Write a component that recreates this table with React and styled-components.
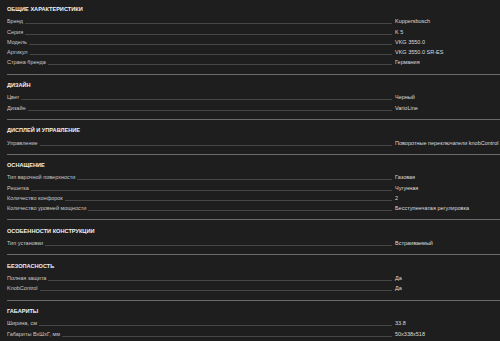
import React from 'react';
import styled, { createGlobalStyle } from 'styled-components';

const GlobalStyle = createGlobalStyle`
  html, body {
    margin: 0;
    padding: 0;
    background: #1e1e1e;
  }
  body {
    font-family: 'Liberation Sans', Arial, sans-serif;
  }
`;

const Page = styled.div`
  min-height: 341px;
  background: #1e1e1e;
  padding: 0 0 0 7px;
  overflow: hidden;
`;

const Section = styled.section`
  padding: 5.5px 0 5.8px;
  border-top: 1px solid #6a6a6a;

  &:first-child {
    border-top: none;
    padding-top: 4px;
  }
`;

const Title = styled.h3`
  margin: 0 0 2.3px;
  font-size: 5.6px;
  line-height: 10px;
  font-weight: 700;
  color: #f2f2f2;
  text-transform: uppercase;
`;

const Row = styled.div`
  display: grid;
  grid-template-columns: 1fr 105px;
  height: 10.3px;
  line-height: 10.3px;
  font-size: 5.5px;
`;

const LabelCell = styled.div`
  display: flex;
  align-items: flex-end;
  min-width: 0;
  padding-right: 3px;
`;

const Label = styled.span`
  color: #c8c8c8;
  white-space: nowrap;
`;

const Leader = styled.span`
  flex: 1;
  margin: 0 0 2.3px 2px;
  border-bottom: 1px solid #454545;
`;

const Value = styled.div`
  color: #dcdcdc;
  white-space: nowrap;
`;

const specs = [
  {
    title: 'Общие характеристики',
    rows: [
      ['Бренд', 'Kuppersbusch'],
      ['Серия', 'K 5'],
      ['Модель', 'VKG 3550.0'],
      ['Артикул', 'VKG 3550.0 SR-ES'],
      ['Страна бренда', 'Германия'],
    ],
  },
  {
    title: 'Дизайн',
    rows: [
      ['Цвет', 'Черный'],
      ['Дизайн', 'VarioLine'],
    ],
  },
  {
    title: 'Дисплей и управление',
    rows: [['Управление', 'Поворотные переключатели knobControl']],
  },
  {
    title: 'Оснащение',
    rows: [
      ['Тип варочной поверхности', 'Газовая'],
      ['Решетка', 'Чугунная'],
      ['Количество конфорок', '2'],
      ['Количество уровней мощности', 'Бесступенчатая регулировка'],
    ],
  },
  {
    title: 'Особенности конструкции',
    rows: [['Тип установки', 'Встраиваемый']],
  },
  {
    title: 'Безопасность',
    rows: [
      ['Полная защита', 'Да'],
      ['KnobControl', 'Да'],
    ],
  },
  {
    title: 'Габариты',
    rows: [
      ['Ширина, см', '33.8'],
      ['Габариты ВхШхГ, мм', '50x338x518'],
    ],
  },
];

const App = () => (
  <>
    <GlobalStyle />
    <Page>
      {specs.map((group) => (
        <Section key={group.title}>
          <Title>{group.title}</Title>
          {group.rows.map(([label, value]) => (
            <Row key={label}>
              <LabelCell>
                <Label>{label}</Label>
                <Leader />
              </LabelCell>
              <Value>{value}</Value>
            </Row>
          ))}
        </Section>
      ))}
    </Page>
  </>
);

export default App;
